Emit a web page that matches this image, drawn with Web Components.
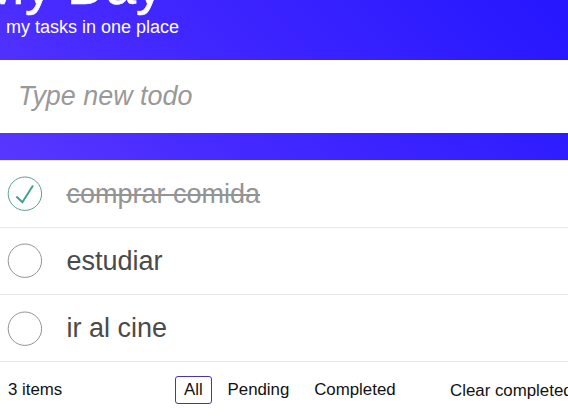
<!DOCTYPE html>
<html lang="en">
<head>
<meta charset="utf-8">
<title>My Day</title>
<style>
html, body { margin: 0; height: 100%; overflow: hidden; }
body { font-family: "Liberation Sans", Arial, sans-serif; background: #fff; }
</style>
</head>
<body>
<todo-app></todo-app>
<script>
const define = (name, html) => {
  const template = document.createElement('template');
  template.innerHTML = html;
  customElements.define(name, class extends HTMLElement {
    connectedCallback() {
      if (this.shadowRoot) return;
      this.attachShadow({ mode: 'open' }).append(template.content.cloneNode(true));
    }
  });
};

define('todo-header', `
<style>
:host { display: flex; flex-direction: column; height: 60px; box-sizing: border-box; justify-content: flex-end; padding: 0 0 22px 6px; color: #fff; }
h1 { margin: 0 0 4px -26px; font-size: 54px; font-weight: 400; line-height: 54px; white-space: nowrap; -webkit-text-stroke: 0.6px #fff; }
p { margin: 0; font-size: 18px; line-height: 22px; white-space: nowrap; }
</style>
<h1><slot name="title"></slot></h1>
<p><slot></slot></p>`);

define('todo-input', `
<style>
:host { display: flex; align-items: center; height: 73px; box-sizing: border-box; padding: 0 18px; background: #fff; }
span { font-size: 26.9px; font-style: italic; color: #999; line-height: 31px; white-space: nowrap; }
</style>
<span><slot></slot></span>`);

define('todo-item', `
<style>
:host { display: flex; align-items: center; height: 67px; box-sizing: border-box; padding-left: 7px; gap: 23.4px; border-bottom: 1px solid #e8e8e8; background: #fff; color: #4a4a4a; }
svg { width: 36px; height: 36px; flex: none; fill: none; stroke: #949494; }
.tick { display: none; }
span { font-size: 27px; line-height: 33px; white-space: nowrap; }
:host([done]) { color: #949494; }
:host([done]) span { text-decoration: line-through; text-decoration-thickness: 2px; }
:host([done]) svg { stroke: #59a193; }
:host([done]) .tick { display: block; }
:host(:last-child) svg { margin-top: 1px; }
</style>
<svg viewBox="0 0 36 36"><circle cx="17.9" cy="17.7" r="16.7" stroke-width="1"/><path class="tick" d="M9.4 20.6 L15.4 26.2 L26 9.5" stroke="#3ea390" stroke-width="2"/></svg>
<span><slot></slot></span>`);

define('filter-link', `
<style>
:host { display: block; box-sizing: border-box; height: 28px; padding: 0 8px; border: 1px solid transparent; border-radius: 3px; line-height: 26px; }
:host([active]) { border-color: #4b33b4; }
</style><slot></slot>`);

define('todo-footer', `
<style>
:host { display: grid; grid-template-columns: 167px 275px auto; align-items: center; height: 56px; box-sizing: border-box; padding-left: 8px; font-size: 16.85px; color: #111; white-space: nowrap; background: #fff; }
nav { display: flex; gap: 6.8px; }
.clear { padding-top: 2px; }
</style>
<span><slot name="count"></slot></span>
<nav><slot></slot></nav>
<span class="clear"><slot name="clear"></slot></span>`);

define('todo-app', `
<style>
:host { display: block; height: 420px; overflow: hidden; background: #fff; }
.hero { height: 160px; background: linear-gradient(45deg, #5837ff 0%, #482bff 28%, #301dff 77%, #2516ff 100%); }
.list { border-top: 1px solid #e6e6e6; }
</style>
<div class="hero">
<todo-header><span slot="title">My Day</span>my tasks in one place</todo-header>
<todo-input>Type new todo</todo-input>
</div>
<div class="list">
<todo-item done>comprar comida</todo-item>
<todo-item>estudiar</todo-item>
<todo-item>ir al cine</todo-item>
</div>
<todo-footer><span slot="count">3 items</span><filter-link active>All</filter-link><filter-link>Pending</filter-link><filter-link>Completed</filter-link><span slot="clear">Clear completed</span></todo-footer>`);
</script>
</body>
</html>
